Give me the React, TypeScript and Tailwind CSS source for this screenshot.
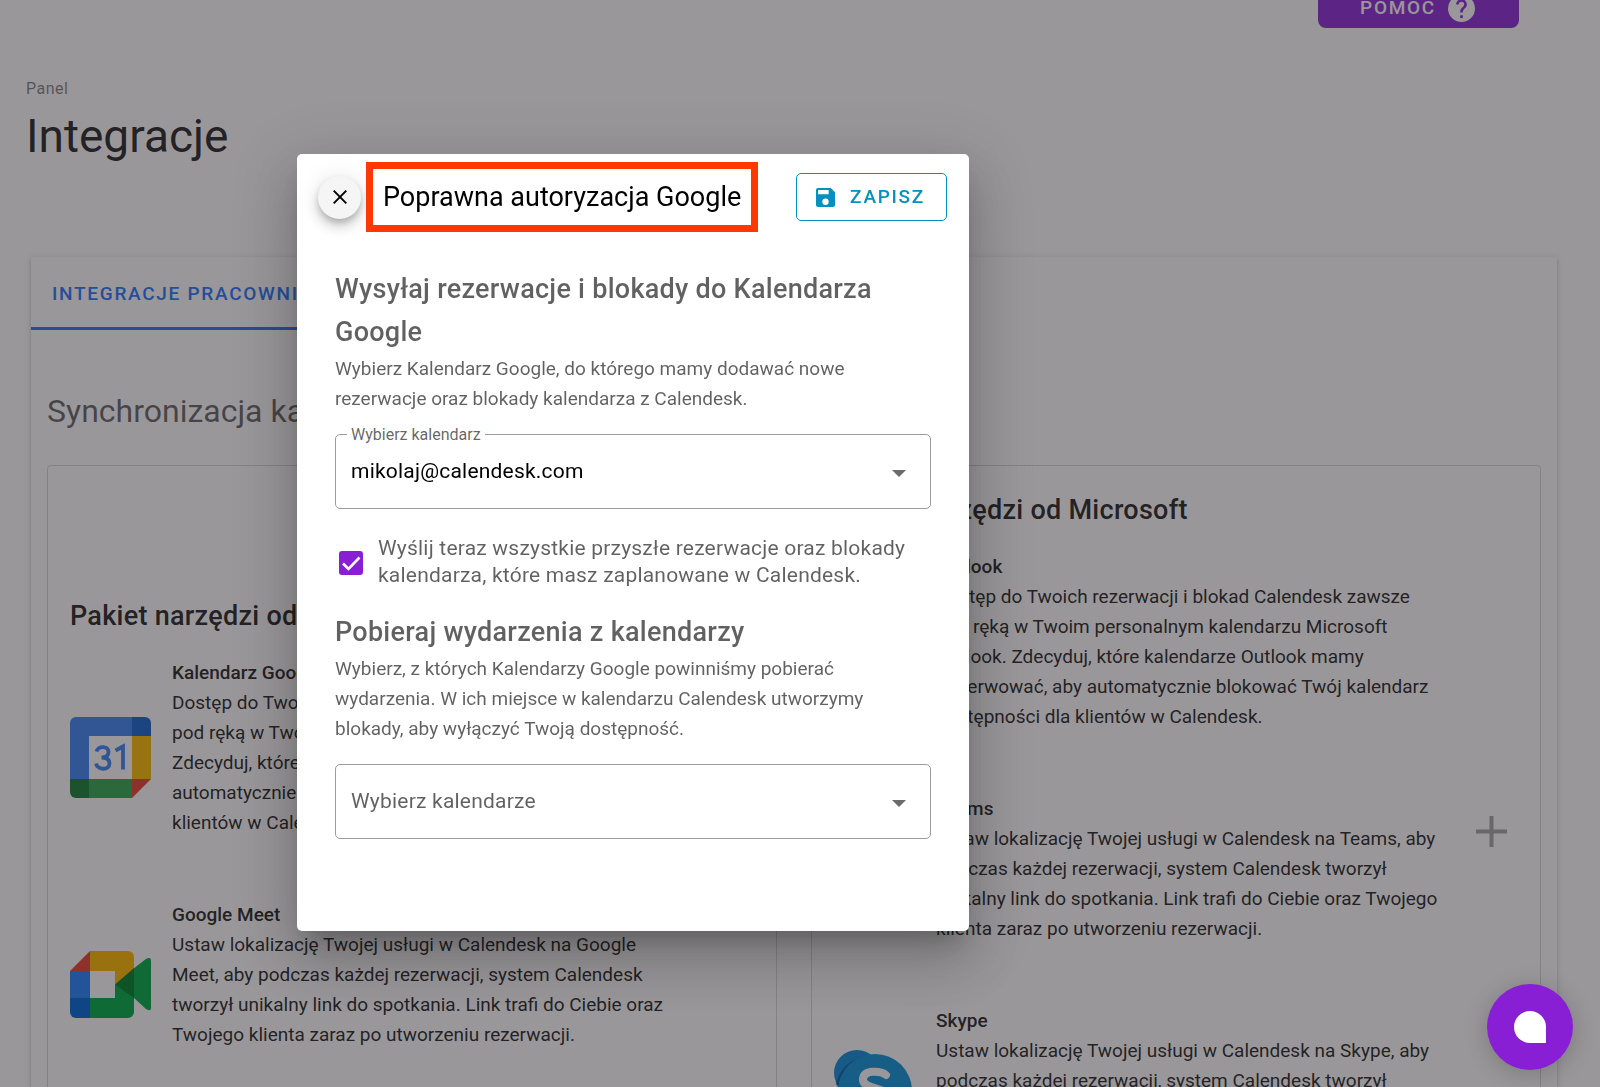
import React from "react";

type Integration = {
  name: string;
  description: string;
  logo: React.ReactNode;
  addable?: boolean;
};

function GoogleCalendarLogo() {
  return (
    <svg viewBox="0 0 81 81" className="size-[81px]" aria-hidden="true">
      <path d="M6 0H62V19H19V62H0V6A6 6 0 0 1 6 0Z" fill="#4285f4" />
      <path d="M62 0H75A6 6 0 0 1 81 6V19H62Z" fill="#1967d2" />
      <path d="M62 19H81V62H62Z" fill="#fbbc04" />
      <path d="M0 62H19V81H6A6 6 0 0 1 0 75Z" fill="#188038" />
      <path d="M19 62H62V81H19Z" fill="#34a853" />
      <path d="M62 62H81L62 81Z" fill="#ea4335" />
      <path d="M19 19H62V62H19Z" fill="#fff" />
      <path
        d="M26.5 34.5C28 28.500 38.500 28.500 38.500 35C38.500 39.500 34.500 40.500 31.500 40.500C35.500 40.500 39.500 42 39.500 46.500C39.500 53.500 27.500 53.500 26 46.500M45.500 33.500L53 29.500V52.500"
        fill="none"
        stroke="#4285f4"
        strokeWidth="3.8"
      />
    </svg>
  );
}

function GoogleMeetLogo() {
  return (
    <svg viewBox="0 0 81 67" className="h-[67px] w-[81px]" aria-hidden="true">
      <path d="M20 0V20H0Z" fill="#ea4335" />
      <path d="M0 20H20V47H0Z" fill="#2684fc" />
      <path d="M0 47H20V67H6A6 6 0 0 1 0 61Z" fill="#0066da" />
      <path d="M20 0H58A6 6 0 0 1 64 6V18L45 34V20H20Z" fill="#ffba00" />
      <path d="M20 47H45V33L64 46V61A6 6 0 0 1 58 67H20Z" fill="#00ac47" />
      <path d="M63 18L76 8Q81 5 81 10V57Q81 61 76 58L63 46Z" fill="#00ac47" />
      <path d="M45 33.500L64 17V47Z" fill="#00832d" />
      <path d="M20 20H45V47H20Z" fill="#fff" />
    </svg>
  );
}

function OutlookLogo() {
  return (
    <svg viewBox="0 0 81 81" className="size-[81px]" aria-hidden="true">
      <rect x="20" y="8" width="56" height="64" rx="4" fill="#28a8ea" />
      <rect x="2" y="20" width="42" height="42" rx="4" fill="#0078d4" />
      <ellipse cx="23" cy="41" rx="10" ry="12" fill="none" stroke="#fff" strokeWidth="5" />
    </svg>
  );
}

function TeamsLogo() {
  return (
    <svg viewBox="0 0 81 81" className="size-[81px]" aria-hidden="true">
      <circle cx="48" cy="14" r="11" fill="#7b83eb" />
      <rect x="28" y="28" width="44" height="46" rx="8" fill="#5059c9" />
      <rect x="2" y="20" width="42" height="42" rx="4" fill="#4b53bc" />
      <path d="M13 32H33M23 32V52" stroke="#fff" strokeWidth="5" />
    </svg>
  );
}

function SkypeLogo() {
  return (
    <svg viewBox="0 0 81 81" className="size-[81px]" aria-hidden="true">
      <circle cx="23" cy="23" r="23" fill="#0f8fdb" />
      <circle cx="58" cy="58" r="22" fill="#0a78d0" />
      <path d="M2 34C5 20 15 9 32 6L22 60Z" fill="#0b62b4" />
      <circle cx="41" cy="41" r="37" fill="#0f96dc" />
      <path
        d="M52 25C47 21 30 19 29 29C28 40 54 36 54 48C54 60 34 59 28 54"
        fill="none"
        stroke="#fff"
        strokeWidth="8"
        strokeLinecap="round"
      />
    </svg>
  );
}

const googleTools: Integration[] = [
  {
    name: "Kalendarz Google",
    description:
      "Dostęp do Twoich rezerwacji i blokad Calendesk zawsze pod ręką w Twoim personalnym kalendarzu Google. Zdecyduj, które kalendarze Google mamy obserwować, automatycznie blokować Twój kalendarz dostępności dla klientów w Calendesk.",
    logo: <GoogleCalendarLogo />,
  },
  {
    name: "Google Meet",
    description:
      "Ustaw lokalizację Twojej usługi w Calendesk na Google Meet, aby podczas każdej rezerwacji, system Calendesk tworzył unikalny link do spotkania. Link trafi do Ciebie oraz Twojego klienta zaraz po utworzeniu rezerwacji.",
    logo: <GoogleMeetLogo />,
  },
];

const microsoftTools: Integration[] = [
  {
    name: "Outlook",
    description:
      "Dostęp do Twoich rezerwacji i blokad Calendesk zawsze pod ręką w Twoim personalnym kalendarzu Microsoft Outlook. Zdecyduj, które kalendarze Outlook mamy obserwować, aby automatycznie blokować Twój kalendarz dostępności dla klientów w Calendesk.",
    logo: <OutlookLogo />,
  },
  {
    name: "Teams",
    description:
      "Ustaw lokalizację Twojej usługi w Calendesk na Teams, aby podczas każdej rezerwacji, system Calendesk tworzył unikalny link do spotkania. Link trafi do Ciebie oraz Twojego klienta zaraz po utworzeniu rezerwacji.",
    logo: <TeamsLogo />,
    addable: true,
  },
  {
    name: "Skype",
    description:
      "Ustaw lokalizację Twojej usługi w Calendesk na Skype, aby podczas każdej rezerwacji, system Calendesk tworzył unikalny link do spotkania. Link trafi do Ciebie oraz Twojego klienta zaraz po utworzeniu rezerwacji.",
    logo: <SkypeLogo />,
  },
];

function IntegrationRow({ item }: { item: Integration }) {
  return (
    <li className="flex items-center gap-[21px]">
      <div className="w-[81px] shrink-0 pt-[18px]">{item.logo}</div>
      <div className="max-w-[507px] text-[19px] leading-[30px]">
        <h3 className="font-medium">{item.name}</h3>
        <p>{item.description}</p>
      </div>
      {item.addable && (
        <button
          type="button"
          aria-label={`Dodaj ${item.name}`}
          className="mt-[22px] ml-auto self-start text-black/35"
        >
          <svg viewBox="0 0 31 31" className="size-[31px]" aria-hidden="true">
            <path d="M15.500 0V31M0 15.500H31" stroke="currentColor" strokeWidth="4" />
          </svg>
        </button>
      )}
    </li>
  );
}

function ToolPackage({
  title,
  items,
  className,
}: {
  title: string;
  items: Integration[];
  className: string;
}) {
  return (
    <section className={`rounded-sm border border-black/15 pr-[33px] pb-10 pl-[22px] ${className}`}>
      <h2 className="text-[27px] leading-10 font-medium tracking-[0.01em]">{title}</h2>
      <ul className="mt-[22px] flex flex-col gap-[62px]">
        {items.map((item) => (
          <IntegrationRow key={item.name} item={item} />
        ))}
      </ul>
    </section>
  );
}

function CaretDown() {
  return (
    <svg
      viewBox="0 0 14 7"
      className="pointer-events-none absolute top-9 right-[25px] h-[7px] w-3.5"
      aria-hidden="true"
    >
      <path d="M0 0H14L7 7Z" fill="#6b6b6e" />
    </svg>
  );
}

function DialogSection({
  title,
  text,
  children,
}: {
  title: string;
  text: string;
  children: React.ReactNode;
}) {
  return (
    <section>
      <h3 className="text-[27px] leading-[43px] font-medium tracking-[0.01em]">{title}</h3>
      <p className="text-[19px] leading-[30px]">{text}</p>
      {children}
    </section>
  );
}

function AuthorizationDialog() {
  return (
    <div className="fixed inset-0 flex items-center justify-center bg-[#211c21]/46 pr-[334px] pb-0.5">
      <div
        role="dialog"
        aria-labelledby="dialog-title"
        className="min-h-[777px] w-full max-w-2xl rounded-[5px] bg-white shadow-[0_15px_20px_-9px_rgba(0,0,0,0.2),0_32px_50px_4px_rgba(0,0,0,0.14),0_12px_61px_11px_rgba(0,0,0,0.12)]"
      >
        <header className="flex items-center pt-2 pr-[22px] pl-[21px]">
          <button
            type="button"
            aria-label="Zamknij"
            className="flex size-[43px] items-center justify-center rounded-full bg-[#f5f5f5] shadow-[0_4px_7px_-1px_rgba(0,0,0,0.2),0_8px_13px_0_rgba(0,0,0,0.14),0_1px_24px_0_rgba(0,0,0,0.1)]"
          >
            <svg viewBox="0 0 14 14" className="size-3.5" aria-hidden="true">
              <path d="M0.700 0.700L13.300 13.300M13.300 0.700L0.700 13.300" stroke="#000" strokeWidth="1.900" />
            </svg>
          </button>
          <h2
            id="dialog-title"
            className="ml-[5px] border-7 border-[#ff3700] px-2.5 py-2 text-[27px] leading-10 whitespace-nowrap text-black"
          >
            Poprawna autoryzacja Google
          </h2>
          <button
            type="button"
            className="ml-auto flex h-12 items-center gap-[15px] rounded-[5px] border border-[#0590c0] pr-[21px] pl-[19px] text-[19px] font-medium tracking-[0.09em] text-[#0590c0]"
          >
            <svg viewBox="3 3 18 18" className="size-[19px]" aria-hidden="true">
              <path
                d="M15 9H5V5h10m-3 14a3 3 0 0 1-3-3 3 3 0 0 1 3-3 3 3 0 0 1 3 3 3 3 0 0 1-3 3m5-16H5a2 2 0 0 0-2 2v14a2 2 0 0 0 2 2h14a2 2 0 0 0 2-2V7l-4-4Z"
                fill="currentColor"
              />
            </svg>
            ZAPISZ
          </button>
        </header>

        <div className="flex flex-col gap-[22px] px-[38px] pt-9 text-black/62">
          <DialogSection
            title="Wysyłaj rezerwacje i blokady do Kalendarza Google"
            text="Wybierz Kalendarz Google, do którego mamy dodawać nowe rezerwacje oraz blokady kalendarza z Calendesk."
          >
            <div className="relative mt-5">
              <label
                htmlFor="target-calendar"
                className="absolute -top-[9px] left-3 bg-white px-1 text-base leading-5"
              >
                Wybierz kalendarz
              </label>
              <select
                id="target-calendar"
                className="block h-[75px] w-full appearance-none rounded-[5px] border border-[#9c9c9f] bg-white px-[15px] text-[21px] tracking-[0.01em] text-black"
              >
                <option>mikolaj@calendesk.com</option>
              </select>
              <CaretDown />
            </div>
            <label className="mt-[26px] flex items-center gap-[15px] pl-1 text-[21px] leading-[27px] tracking-[0.01em]">
              <span className="relative mt-0.5 size-6 shrink-0">
                <input
                  type="checkbox"
                  defaultChecked
                  className="peer block size-6 appearance-none rounded-[3px] border-2 border-[#881fd4] bg-white checked:bg-[#881fd4]"
                />
                <svg
                  viewBox="0 0 24 24"
                  className="pointer-events-none absolute inset-0 hidden size-6 peer-checked:block"
                  aria-hidden="true"
                >
                  <path d="M4 12.500L9.500 18L20.500 6.500" fill="none" stroke="#fff" strokeWidth="2.600" />
                </svg>
              </span>
              Wyślij teraz wszystkie przyszłe rezerwacje oraz blokady kalendarza, które masz
              zaplanowane w Calendesk.
            </label>
          </DialogSection>

          <DialogSection
            title="Pobieraj wydarzenia z kalendarzy"
            text="Wybierz, z których Kalendarzy Google powinniśmy pobierać wydarzenia. W ich miejsce w kalendarzu Calendesk utworzymy blokady, aby wyłączyć Twoją dostępność."
          >
            <div className="relative mt-5">
              <select
                aria-label="Wybierz kalendarze"
                className="block h-[75px] w-full appearance-none rounded-[5px] border border-[#9c9c9f] bg-white px-[15px] text-[21px] tracking-[0.01em]"
              >
                <option>Wybierz kalendarze</option>
              </select>
              <CaretDown />
            </div>
          </DialogSection>
        </div>
      </div>
    </div>
  );
}

export default function App() {
  return (
    <div className="h-screen overflow-hidden bg-white font-['Roboto',sans-serif] text-black/87">
      <div className="flex h-[77px] items-start justify-end pr-[81px]">
        <button
          type="button"
          className="-mt-[11px] flex h-[39px] items-center gap-3 rounded-lg bg-[#8e2bd9] pr-11 pl-[42px] text-[19px] font-medium tracking-[0.09em] text-white"
        >
          POMOC
          <svg viewBox="2 2 20 20" className="size-[27px]" aria-hidden="true">
            <path
              d="M15.070 11.250l-.9.920C13.450 12.890 13 13.500 13 15h-2v-.5c0-1.110.45-2.110 1.170-2.830l1.240-1.260c.37-.36.590-.86.590-1.410a2 2 0 0 0-2-2 2 2 0 0 0-2 2H8a4 4 0 0 1 4-4 4 4 0 0 1 4 4 3.200 3.200 0 0 1-.93 2.250M13 19h-2v-2h2M12 2A10 10 0 0 0 2 12a10 10 0 0 0 10 10 10 10 0 0 0 10-10c0-5.530-4.500-10-10-10Z"
              fill="currentColor"
            />
          </svg>
        </button>
      </div>

      <header className="px-[26px]">
        <p className="text-base leading-6 tracking-[0.03em] text-black/50">Panel</p>
        <h1 className="mt-[11px] text-[46px] leading-[48px]">Integracje</h1>
      </header>

      <main className="mt-[97px] mr-[43px] ml-[31px] bg-white shadow-[0_4px_2px_-3px_rgba(0,0,0,0.2),0_2px_3px_0_rgba(0,0,0,0.14),0_1px_7px_0_rgba(0,0,0,0.12)]">
        <nav className="flex">
          <a
            href="#pracownik"
            className="flex h-[73px] items-center border-b-3 border-[#2979ff] px-[21px] pt-1 text-[19px] font-medium tracking-[0.09em] text-[#2979ff]"
          >
            INTEGRACJE PRACOWNIKA
          </a>
        </nav>
        <div className="px-4 pt-[61px]">
          <h2 className="text-[32px] leading-10 text-black/60">Synchronizacja kalendarzy</h2>
          <div className="mt-[34px] grid grid-cols-2 gap-[34px]">
            <ToolPackage title="Pakiet narzędzi od Google" items={googleTools} className="pt-[130px]" />
            <ToolPackage title="Pakiet narzędzi od Microsoft" items={microsoftTools} className="pt-6" />
          </div>
        </div>
      </main>

      <AuthorizationDialog />

      <button
        type="button"
        aria-label="Otwórz czat"
        className="fixed right-[27px] bottom-[17px] flex size-[86px] items-center justify-center rounded-full bg-[#881fd4] shadow-[0_4px_24px_rgba(0,0,0,0.2)]"
      >
        <span className="size-8 rounded-full rounded-br-none bg-white" />
      </button>
    </div>
  );
}
